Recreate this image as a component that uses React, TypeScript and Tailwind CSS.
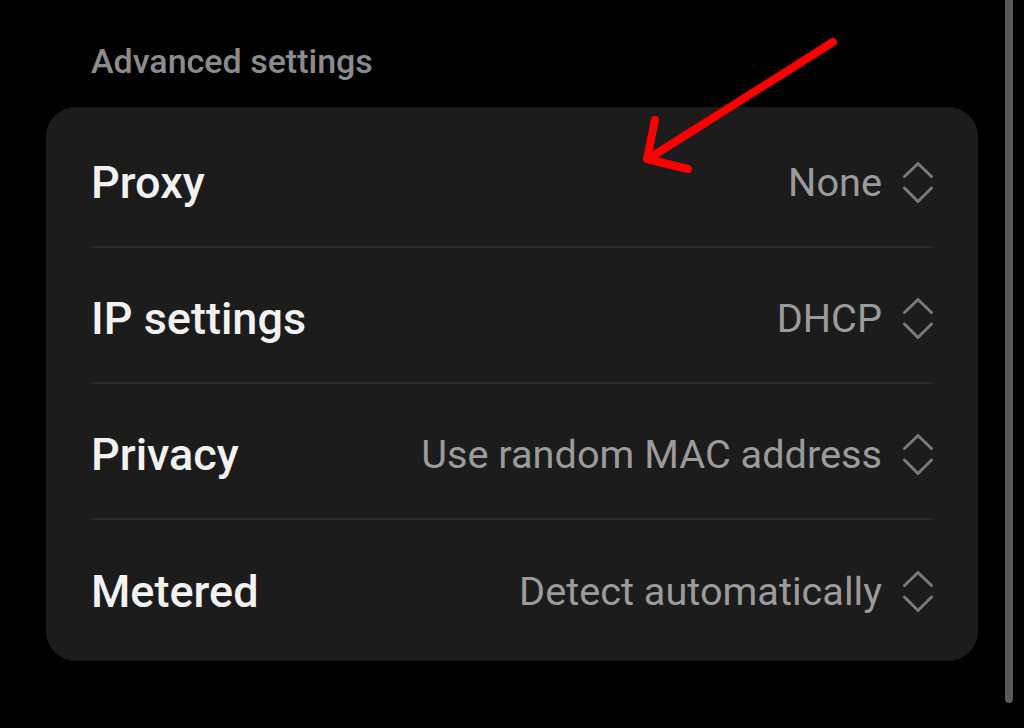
const rows = [
  { label: "Proxy", value: "None" },
  { label: "IP settings", value: "DHCP" },
  { label: "Privacy", value: "Use random MAC address" },
  { label: "Metered", value: "Detect automatically" },
];

const UpDown = () => (
  <svg width="30" height="42" viewBox="0 0 30 42" fill="none" className="shrink-0">
    <polyline points="1.5,14.5 15,1.5 28.5,14.5" stroke="#7a7a7a" strokeWidth="3" strokeLinecap="round" strokeLinejoin="round" />
    <polyline points="1.5,26 15,39.5 28.5,26" stroke="#7a7a7a" strokeWidth="3" strokeLinecap="round" strokeLinejoin="round" />
  </svg>
);

export default function App() {
  return (
    <div
      className="relative h-[728px] w-[1024px] overflow-hidden bg-black"
      style={{ fontFamily: "Roboto, 'Noto Sans', sans-serif" }}
    >
      <div className="px-[46px] pt-[41px]">
        {/* Section header */}
        <h2 className="pl-[45px] text-[34px] leading-[40px] font-medium text-[#8c8c8c]">
          Advanced settings
        </h2>

        {/* Settings card */}
        <div className="mt-[26px] w-[932px] rounded-[30px] bg-[#1c1c1c] px-[45px] py-[5px]">
          <div className="divide-y-2 divide-[#2b2b2b]">
            {rows.map((row) => (
              <div key={row.label} className="flex h-[136px] items-center justify-between pt-[8px]">
                <span className="text-[45px] leading-[52px] font-medium text-[#f2f2f2]">
                  {row.label}
                </span>
                <div className="flex items-center gap-[21px]">
                  <span className="text-[39.7px] leading-[48px] text-[#9b9b9b]">{row.value}</span>
                  <UpDown />
                </div>
              </div>
            ))}
          </div>
        </div>
      </div>

      {/* Scrollbar */}
      <div className="absolute top-0 right-[11px] h-[703px] w-[8px] rounded-b-full bg-[#595959]" />

      {/* Red annotation arrow */}
      <svg className="absolute inset-0 pointer-events-none" width="1024" height="728" viewBox="0 0 1024 728" fill="none">
        <line x1="833" y1="42" x2="648" y2="159" stroke="#ff0000" strokeWidth="8" strokeLinecap="round" />
        <polyline points="655,120 647,159 688,169" stroke="#ff0000" strokeWidth="8" strokeLinecap="round" strokeLinejoin="round" />
      </svg>
    </div>
  );
}
